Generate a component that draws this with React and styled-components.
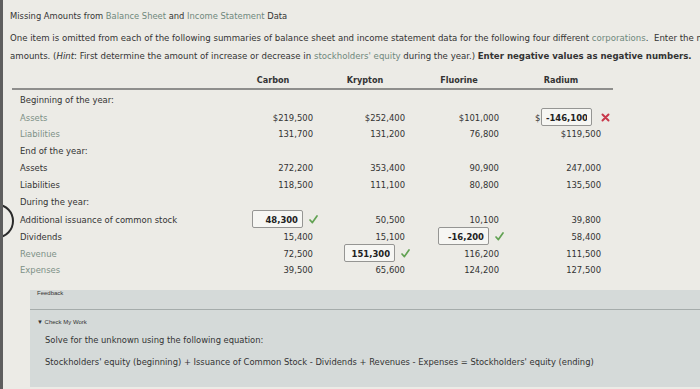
import React from "react";
import styled, { createGlobalStyle } from "styled-components";

const Global = createGlobalStyle`
  html, body {
    margin: 0;
    padding: 0;
    background: #ecebe6;
  }
  body {
    font-family: "DejaVu Sans Condensed", "DejaVu Sans", sans-serif;
    color: #333;
  }
`;

const rows = [
  { label: "Beginning of the year:" },
  { label: "Assets", link: true, values: ["$219,500", "$252,400", "$101,000", { input: "-146,100", dollar: true, wrong: true }] },
  { label: "Liabilities", link: true, values: ["131,700", "131,200", "76,800", "$119,500"] },
  { label: "End of the year:" },
  { label: "Assets", values: ["272,200", "353,400", "90,900", "247,000"] },
  { label: "Liabilities", values: ["118,500", "111,100", "80,800", "135,500"] },
  { label: "During the year:" },
  { label: "Additional issuance of common stock", values: [{ input: "48,300" }, "50,500", "10,100", "39,800"] },
  { label: "Dividends", values: ["15,400", "15,100", { input: "-16,200" }, "58,400"] },
  { label: "Revenue", link: true, values: ["72,500", { input: "151,300" }, "116,200", "111,500"] },
  { label: "Expenses", link: true, values: ["39,500", "65,600", "124,200", "127,500"] },
];

const columns = ["Carbon", "Krypton", "Fluorine", "Radium"];

function Check() {
  return (
    <svg width="9" height="9" viewBox="0 0 9 9">
      <path d="M1 5 L3.4 7.6 L8 1" fill="none" stroke="#62a253" strokeWidth="1.7" strokeLinecap="round" strokeLinejoin="round" />
    </svg>
  );
}

function Cross() {
  return (
    <svg width="9" height="9" viewBox="0 0 9 9">
      <path d="M1.5 1.5 L7.5 7.5 M7.5 1.5 L1.5 7.5" fill="none" stroke="#c8374a" strokeWidth="2" strokeLinecap="round" />
    </svg>
  );
}

export default function App() {
  return (
    <>
      <Global />
      <Page>
        <NavCircle />
        <Title>
          Missing Amounts from <Link>Balance Sheet</Link> and <Link>Income Statement</Link> Data
        </Title>
        <Intro>
          <Line>
            One item is omitted from each of the following summaries of balance sheet and income statement data for the following four different <Link>corporations</Link>.&nbsp; Enter the missing
          </Line>
          <Line>
            amounts. (<i>Hint</i>: First determine the amount of increase or decrease in <Link>stockholders' equity</Link> during the year.) <b>Enter negative values as negative numbers.</b>
          </Line>
        </Intro>

        <Table>
          <HeadRow>
            <div />
            {columns.map((c) => (
              <HeadCell key={c}>{c}</HeadCell>
            ))}
          </HeadRow>
          {rows.map((r, i) => (
            <Row key={i}>
              <Label $link={r.link}>{r.label}</Label>
              {r.values &&
                r.values.map((v, j) =>
                  typeof v === "string" ? (
                    <Value key={j}>{v}</Value>
                  ) : (
                    <InputCell key={j} $dollar={v.dollar}>
                      {v.dollar && <Dollar>$</Dollar>}
                      <Box readOnly value={v.input} />
                      <Mark $wrong={v.wrong}>{v.wrong ? <Cross /> : <Check />}</Mark>
                    </InputCell>
                  )
                )}
            </Row>
          ))}
        </Table>

        <Feedback>
          <FeedbackHead>Feedback</FeedbackHead>
          <FeedbackBody>
            <Toggle>▼ Check My Work</Toggle>
            <Hint>Solve for the unknown using the following equation:</Hint>
            <Hint>
              Stockholders' equity (beginning) + Issuance of Common Stock - Dividends + Revenues - Expenses = Stockholders' equity (ending)
            </Hint>
          </FeedbackBody>
        </Feedback>
      </Page>
    </>
  );
}

const Page = styled.div`
  position: relative;
  height: 389px;
  box-sizing: border-box;
  border-left: 3px solid #5e5e5e;
  padding: 9px 0 0 7px;
  overflow: hidden;
  font-size: 9.4px;
`;

const NavCircle = styled.div`
  position: absolute;
  left: -21px;
  top: 204px;
  width: 28px;
  height: 30px;
  border: 2px solid #2a2a2a;
  border-radius: 50%;
`;

const Link = styled.span`
  color: #6f887c;
`;

const Title = styled.div`
  height: 14px;
  line-height: 14px;
  font-size: 9.3px;
  white-space: nowrap;
`;

const Intro = styled.div`
  margin-top: 6px;
  font-size: 9.55px;
`;

const Line = styled.div`
  line-height: 18px;
  white-space: nowrap;
`;

const Table = styled.div`
  margin: 6px 0 0 2px;
  width: 601px;
`;

const grid = `
  display: grid;
  grid-template-columns: 221px 92px 94px 102px 92px;
  align-items: center;
`;

const HeadRow = styled.div`
  ${grid};
  height: 17px;
  border-bottom: 2px solid #8e8e8c;
`;

const HeadCell = styled.div`
  width: 80px;
  text-align: center;
  font-weight: bold;
  font-size: 9px;
`;

const Row = styled.div`
  ${grid};
  height: 17px;
  &:nth-child(2) {
    margin-top: 1px;
  }
`;

const Label = styled.div`
  padding-left: 8px;
  color: ${(p) => (p.$link ? "#7d9186" : "#333")};
  white-space: nowrap;
`;

const Value = styled.div`
  width: 80px;
  text-align: right;
`;

const InputCell = styled.div`
  display: flex;
  align-items: center;
  padding-left: ${(p) => (p.$dollar ? 14 : 19)}px;
`;

const Dollar = styled.span`
  width: 6px;
`;

const Box = styled.input`
  box-sizing: border-box;
  width: 51px;
  height: 18px;
  border: 1px solid #959593;
  border-radius: 2px;
  background: #f6f6f3;
  padding: 0 4px;
  text-align: right;
  font: bold 9.4px "DejaVu Sans Condensed", "DejaVu Sans", sans-serif;
  color: #222;
  outline: none;
`;

const Mark = styled.span`
  display: flex;
  margin-left: ${(p) => (p.$wrong ? 9 : 6)}px;
`;

const Feedback = styled.div`
  margin: 12px 0 0 20px;
  height: 97px;
  background: #d5dad9;
`;

const FeedbackHead = styled.div`
  height: 19px;
  line-height: 17px;
  padding-left: 7px;
  font: 6px "Liberation Sans", Arial, sans-serif;
  color: #333;
  border-bottom: 1px solid #a5acab;
`;

const FeedbackBody = styled.div`
  padding: 7px 0 0 7px;
`;

const Toggle = styled.div`
  font: 6px "Liberation Sans", Arial, sans-serif;
  height: 10px;
  line-height: 10px;
  margin-bottom: 2px;
`;

const Hint = styled.div`
  padding-left: 8px;
  line-height: 22px;
  white-space: nowrap;
  font-size: 9.3px;
`;
